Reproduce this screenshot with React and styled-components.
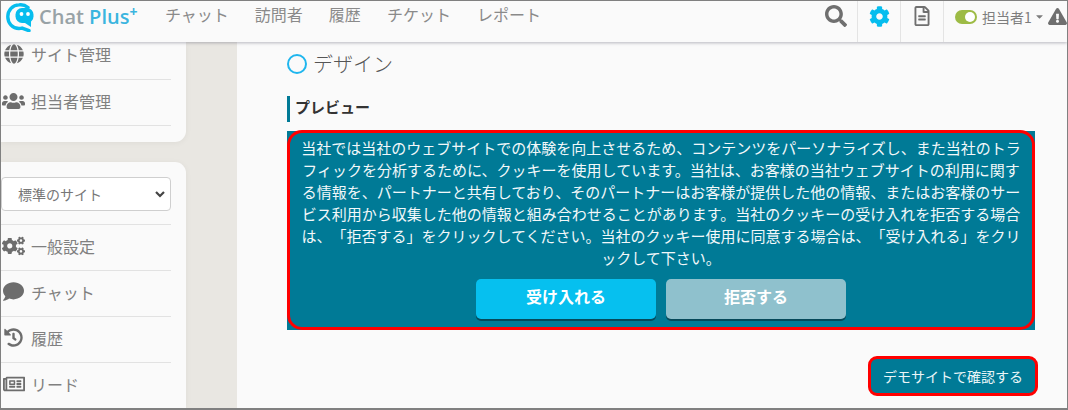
import React from "react";
import styled, { createGlobalStyle } from "styled-components";
import { FaGlobe, FaUsers, FaCogs, FaComment, FaHistory, FaRegNewspaper, FaSearch, FaCog, FaRegFileAlt, FaExclamationTriangle, FaCaretDown } from "react-icons/fa";

const Global = createGlobalStyle`
  html, body { margin: 0; padding: 0; width: 1068px; height: 410px; overflow: hidden; }
  * { box-sizing: border-box; }
  body { font-family: "Noto Sans CJK JP", "Noto Sans", sans-serif; text-spacing-trim: space-all; }
`;
const Frame = styled.div`
  width: 1068px; height: 410px; border: 1px solid #808080; border-bottom-width: 2px; overflow: hidden;
  display: flex; flex-direction: column; background: #e9e7e2; position: relative;
`;
const Header = styled.header`
  height: 41px; flex: none; display: flex; align-items: stretch; background: #fafafa;
  box-shadow: 0 1px 3px rgba(80,80,100,.4); position: relative; z-index: 2;
`;
const Logo = styled.div`
  width: 164px; flex: none; display: flex; align-items: flex-start; padding: 2px 0 0 5px; gap: 5px;
`;
const LogoText = styled.span`
  font: 600 20px/28px "Open Sans", sans-serif; color: #98a2a6; white-space: nowrap;
  b { color: #3bb5df; font-weight: 600; }
  sup { color: #3bb5df; font-size: 14px; line-height: 0; vertical-align: 7px; font-weight: 700; }
`;
const Nav = styled.nav`
  flex: 1; display: flex; align-items: center; gap: 26px; font-size: 16px; color: #8a8a8a; padding-bottom: 15px;
`;
const Tool = styled.div`
  width: 43px; display: flex; align-items: center; justify-content: center; border-left: ${p => p.$plain ? "none" : "1px solid #e4e4e4"};
  color: ${p => p.$active ? "#06bdee" : "#6f6f6f"}; font-size: ${p => p.$s || 21}px; padding-bottom: 11px;
`;
const UserBox = styled.div`
  width: 124px; flex: none; border-left: 1px solid #e4e4e4; display: flex; align-items: center; padding: 0 0 10px 11px;
  font-size: 14px; color: #7d7d7d; white-space: nowrap; overflow: hidden;
  svg { flex: none; }
`;
const Toggle = styled.span`
  width: 22px; height: 14px; border-radius: 7px; background: #9dbb45; position: relative; margin-right: 5px; flex: none;
  &::after { content: ""; position: absolute; right: 2px; top: 2px; width: 10px; height: 10px; border-radius: 50%; background: #fff; }
`;
const Body = styled.div`
  flex: 1; display: flex; min-height: 0;
`;
const Side = styled.aside`
  width: 185px; flex: none; display: flex; flex-direction: column; gap: 20px;
`;
const Card = styled.div`
  background: #fafafa; border-radius: ${p => p.$top ? "0 0 11px 0" : "0 11px 0 0"};
  padding-right: 15px; box-shadow: 0 1px 6px rgba(0,0,0,.05);
  ${p => p.$top ? "height: 100px; flex: none;" : "flex: 1; padding-top: 15px; min-height: 0;"}
`;
const Row = styled.div`
  height: ${p => p.$h || 46}px; margin-top: ${p => p.$mt || 0}px; display: flex; align-items: center; border-bottom: 1px solid #e2e2e2;
  font-size: 16px; color: #808080; gap: 6px; padding: 0 0 4px 1px;
`;
const IconSlot = styled.span`
  width: 23px; flex: none; display: flex; justify-content: center; color: #6d6d6d; font-size: ${p => p.$s || 19}px;
`;
const SelectBox = styled.div`
  height: 34px; width: 170px; background: #fff; border: 1px solid #cfcfcf; border-radius: 4px;
  display: flex; align-items: center; justify-content: space-between; padding: 0 4px 0 16px;
  font-size: 14px; color: #777; margin-bottom: 13px;
`;
const Divider = styled.div`height: 1px; background: #e2e2e2;`;
const Main = styled.main`
  margin-left: 51px; flex: 1; background: #fafafa; padding: 7px 33px 0 50px; display: flex; flex-direction: column; margin-right: -1px; min-width: 0;
`;
const SectionTitle = styled.div`
  display: flex; align-items: center; gap: 6px; font-size: 20px; color: #555; line-height: 30px; font-weight: 300;
`;
const Ring = styled.span`
  width: 20px; height: 20px; border: 2.5px solid #1fb6ee; border-radius: 50%; flex: none;
`;
const SubTitle = styled.div`
  margin-top: 17px; border-left: 3px solid #007a96; height: 26px; padding-left: 5px;
  font-size: 15px; font-weight: 700; color: #333; line-height: 21px;
`;
const Preview = styled.div`
  margin-top: 9px; height: 199px; width: 748px; background: #007a96; padding: 6px 13px 0; position: relative; flex: none;
  display: flex; flex-direction: column; align-items: center;
`;
const Msg = styled.p`
  margin: 0; color: #f2f8fa; font-size: 15px; line-height: 22px; text-align: center; width: 100%;
`;
const Buttons = styled.div`
  display: flex; gap: 10px; margin-top: 10px;
`;
const CookieBtn = styled.div`
  width: 180px; height: 40px; border-radius: 5px; display: flex; align-items: center; justify-content: center;
  font-size: 16px; font-weight: 700; color: #fff; padding-bottom: 6px;
  background: ${p => p.$light ? "#8fc1cd" : "#06c0ef"};
  box-shadow: 0 2px 0 #06495a;
`;
const Highlight = styled.div`
  position: absolute; left: 0; right: 0; top: -1px; bottom: 0; border: 3.5px solid #ff0000; border-radius: 15px; pointer-events: none;
`;
const DemoWrap = styled.div`
  align-self: flex-end; margin-top: 26px; margin-right: -3px;
`;
const DemoBtn = styled.div`
  width: 170px; height: 40px; background: #007a96; border: 3.5px solid #ff0000; border-radius: 9px; padding-bottom: 1px;
  display: flex; align-items: center; justify-content: center; color: #eaf6f8; font-size: 14px; white-space: nowrap;
`;

const ChatLogo = () => (
  <svg width="28" height="29" viewBox="0 0 28 29">
    <path d="M22 4.5A11.6 11.6 0 0 0 13 1.9C6.6 1.9 1.8 7.2 1.8 13.8S6.6 25.5 13 25.5c1 0 2-.1 3-.4l7 2.6" fill="none" stroke="#06bdee" strokeWidth="3.4" strokeLinecap="round" />
    <rect x="9.5" y="5" width="18" height="15" rx="6.5" fill="#06bdee" />
    <path d="M16 18h9v6z" fill="#06bdee" />
    <circle cx="15.5" cy="11" r="1.9" fill="#fff" /><circle cx="22" cy="11" r="1.9" fill="#fff" />
  </svg>
);

const text = "当社では当社のウェブサイトでの体験を向上させるため、コンテンツをパーソナライズし、また当社のトラフィックを分析するために、クッキーを使用しています。当社は、お客様の当社ウェブサイトの利用に関する情報を、パートナーと共有しており、そのパートナーはお客様が提供した他の情報、またはお客様のサービス利用から収集した他の情報と組み合わせることがあります。当社のクッキーの受け入れを拒否する場合は、「拒否する」をクリックしてください。当社のクッキー使用に同意する場合は、「受け入れる」をクリックして下さい。";

export default function App() {
  return (
    <Frame>
      <Global />
      <Header>
        <Logo>
          <ChatLogo />
          <LogoText>Chat <b>Plus</b><sup>+</sup></LogoText>
        </Logo>
        <Nav>
          <span>チャット</span><span>訪問者</span><span>履歴</span><span>チケット</span><span>レポート</span>
        </Nav>
        <Tool $plain $s={22}><FaSearch /></Tool>
        <Tool $active><FaCog /></Tool>
        <Tool $s={20}><FaRegFileAlt /></Tool>
        <UserBox>
          <Toggle />担当者1<FaCaretDown size={11} style={{ margin: "0 3px 0 2px" }} /><FaExclamationTriangle size={19} color="#6f6f6f" />
        </UserBox>
      </Header>
      <Body>
        <Side>
          <Card $top>
            <Row $h={47} $mt={-9}><IconSlot $s={20}><FaGlobe /></IconSlot>サイト管理</Row>
            <Row><IconSlot $s={24}><FaUsers /></IconSlot>担当者管理</Row>
          </Card>
          <Card>
            <SelectBox>標準のサイト
              <svg width="12" height="8" viewBox="0 0 12 8"><path d="M2 2l4 4 4-4" fill="none" stroke="#444" strokeWidth="2.2" /></svg>
            </SelectBox>
            <Divider />
            <Row><IconSlot $s={24}><FaCogs /></IconSlot>一般設定</Row>
            <Row><IconSlot $s={21}><FaComment /></IconSlot>チャット</Row>
            <Row><IconSlot $s={19}><FaHistory /></IconSlot>履歴</Row>
            <Row><IconSlot $s={22}><FaRegNewspaper /></IconSlot>リード</Row>
          </Card>
        </Side>
        <Main>
          <SectionTitle><Ring />デザイン</SectionTitle>
          <SubTitle>プレビュー</SubTitle>
          <Preview>
            <Msg>{text}</Msg>
            <Buttons>
              <CookieBtn>受け入れる</CookieBtn>
              <CookieBtn $light>拒否する</CookieBtn>
            </Buttons>
            <Highlight />
          </Preview>
          <DemoWrap><DemoBtn>デモサイトで確認する</DemoBtn></DemoWrap>
        </Main>
      </Body>
    </Frame>
  );
}
